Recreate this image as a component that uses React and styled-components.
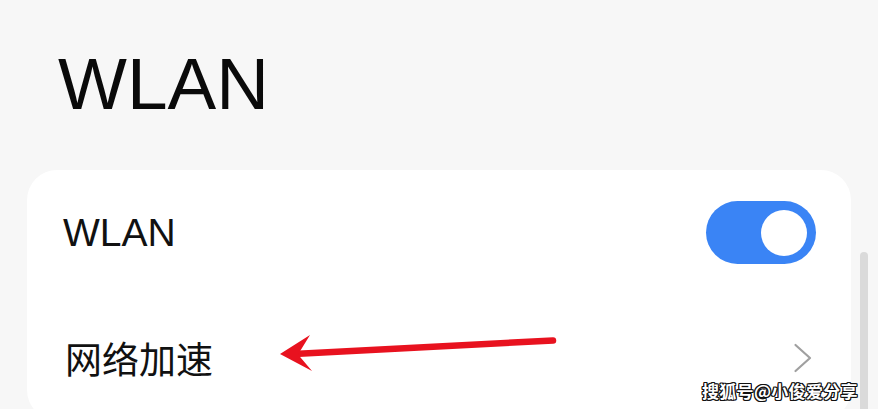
import styled, { createGlobalStyle } from "styled-components";

const GlobalStyle = createGlobalStyle`
  html, body {
    margin: 0;
    padding: 0;
    background: #f7f7f7;
    overflow: hidden;
  }
  body {
    font-family: "Liberation Sans", "Noto Sans CJK SC", sans-serif;
  }
`;

const Chevron = () => (
  <svg width="20" height="30" viewBox="0 0 20 30" fill="none">
    <path d="M2.5 2 L17 15 L2.5 28" stroke="#a0a0a0" strokeWidth="2.2" strokeLinecap="round" strokeLinejoin="round" />
  </svg>
);

const App = () => {
  return (
    <>
      <GlobalStyle />
      <PageStyled>
        <Title>WLAN</Title>
        <Card>
          <Row>
            <Label>WLAN</Label>
            <Toggle $on>
              <span className="knob" />
            </Toggle>
          </Row>
          <Row>
            <Label $cjk>网络加速</Label>
            <Chevron />
          </Row>
        </Card>
        <ScrollThumb />
        <Arrow width="290" height="50" viewBox="0 0 290 50">
          <line x1="14" y1="29" x2="273" y2="15.5" stroke="#e8121f" strokeWidth="6.5" strokeLinecap="round" />
          <path d="M0 29 L30 10 L18 29.5 L32 46 Z" fill="#e8121f" />
        </Arrow>
        <Watermark>搜狐号@小俊爱分享</Watermark>
      </PageStyled>
    </>
  );
};

const PageStyled = styled.div`
  position: relative;
  width: 878px;
  height: 409px;
  overflow: hidden;
  padding-top: 47px;
  box-sizing: border-box;
`;

const Title = styled.h1`
  margin: 0 0 50px 58px;
  font-family: "Liberation Sans", sans-serif;
  font-weight: 400;
  font-size: 73px;
  line-height: 1;
  color: #0a0a0a;
`;

const Card = styled.div`
  margin-left: 27px;
  width: 824px;
  background: #ffffff;
  border-radius: 30px;
  padding: 0 35px 0 36px;
  box-sizing: border-box;
`;

const Row = styled.div`
  height: 125px;
  display: flex;
  align-items: center;
  justify-content: space-between;

  svg {
    margin-right: 3px;
  }
`;

const Label = styled.span`
  font-family: "Liberation Sans", "Noto Sans CJK SC", sans-serif;
  font-size: ${(p) => (p.$cjk ? "37px" : "39px")};
  margin-left: ${(p) => (p.$cjk ? "2px" : "0")};
  color: #111;
`;

const Toggle = styled.div`
  width: 110px;
  height: 63px;
  border-radius: 32px;
  background: ${(p) => (p.$on ? "#3a84f5" : "#cfcfcf")};
  display: flex;
  align-items: center;
  justify-content: ${(p) => (p.$on ? "flex-end" : "flex-start")};
  padding: 0 9px;
  box-sizing: border-box;

  .knob {
    width: 46px;
    height: 46px;
    border-radius: 50%;
    background: #fff;
  }
`;

const ScrollThumb = styled.div`
  position: absolute;
  left: 860px;
  top: 252px;
  bottom: -10px;
  width: 8px;
  border-radius: 4px;
  background: #dadada;
`;

const Arrow = styled.svg`
  position: absolute;
  left: 280px;
  top: 325px;
`;

const Watermark = styled.div`
  position: absolute;
  left: 702px;
  top: 378px;
  font-family: "Noto Sans CJK SC", sans-serif;
  font-size: 17px;
  font-weight: 700;
  letter-spacing: 0.3px;
  color: #fff;
  text-shadow: -1px -1px 0 #111, 1px -1px 0 #111, -1px 1px 0 #111, 1px 1px 0 #111, 0 1px 0 #111, 0 -1px 0 #111, 1px 0 0 #111, -1px 0 0 #111;
`;

export default App;
